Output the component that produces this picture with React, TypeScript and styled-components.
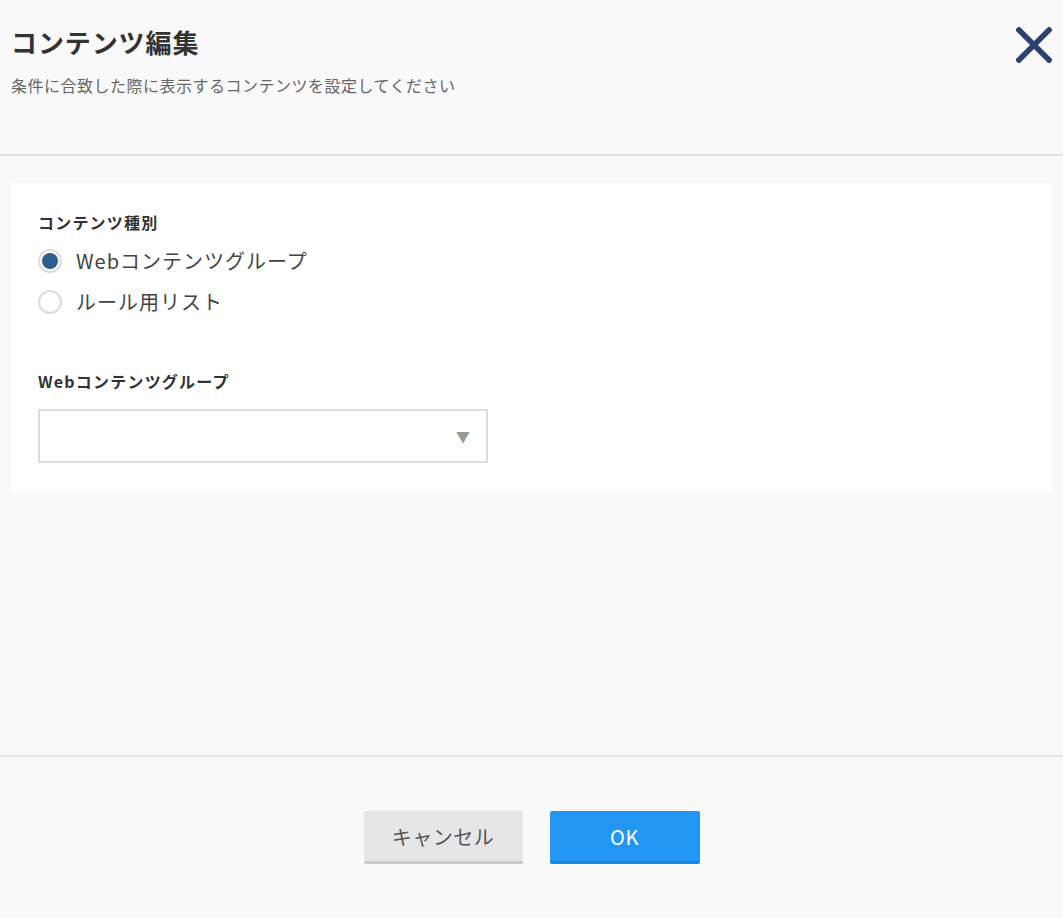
import React, { useState } from "react";
import styled, { createGlobalStyle } from "styled-components";

const GlobalStyle = createGlobalStyle`
  html, body {
    margin: 0;
    padding: 0;
    background: #f9f9f9;
    font-family: "Noto Sans CJK JP", "Noto Sans", sans-serif;
    color: #333;
  }
`;

const Page = styled.div`
  display: flex;
  flex-direction: column;
  height: 918px;
  background: #f9f9f9;
`;

const Header = styled.header`
  display: flex;
  justify-content: space-between;
  align-items: flex-start;
  height: 156px;
  padding: 0 11px;
  border-bottom: 2px solid #e4e4e4;
  box-sizing: border-box;
`;

const TitleBlock = styled.div`
  display: flex;
  flex-direction: column;
`;

const Title = styled.h1`
  margin: 24px 0 0;
  font-size: 26px;
  line-height: 36px;
  font-weight: 700;
  letter-spacing: 0.9px;
  color: #333;
`;

const Subtitle = styled.p`
  margin: 13px 0 0;
  font-size: 16px;
  line-height: 24px;
  letter-spacing: 0.5px;
  color: #666;
`;

const CloseButton = styled.button`
  margin-top: 27px;
  padding: 0;
  border: none;
  background: none;
  cursor: pointer;
  display: flex;
`;

const Body = styled.main`
  flex: 1;
  padding: 27px 11px 0;
`;

const Card = styled.section`
  background: #fff;
  padding: 27px 27px 28px;
  display: flex;
  flex-direction: column;
  box-shadow: 0 0 1px rgba(0, 0, 0, 0.04);
`;

const Label = styled.div<{ $gap?: number }>`
  font-size: 16px;
  line-height: 24px;
  font-weight: 700;
  letter-spacing: 1.2px;
  color: #333;
  margin-top: ${(p) => p.$gap ?? 0}px;
`;

const RadioRow = styled.label`
  display: flex;
  align-items: center;
  height: 41px;
  gap: 14px;
  cursor: pointer;
  font-size: 20px;
  letter-spacing: 1px;
  color: #444;
`;

const RadioCircle = styled.span<{ $checked: boolean }>`
  width: 24px;
  height: 24px;
  border-radius: 50%;
  border: 2px solid #dcdcdc;
  box-sizing: border-box;
  display: flex;
  align-items: center;
  justify-content: center;
  &::after {
    content: "";
    width: 16px;
    height: 16px;
    border-radius: 50%;
    background: ${(p) => (p.$checked ? "#2e5d8e" : "transparent")};
  }
`;

const RadioGroup = styled.div`
  display: flex;
  flex-direction: column;
  margin-top: 6px;
`;

const Select = styled.div`
  margin-top: 16px;
  width: 450px;
  height: 54px;
  border: 2px solid #dcdcdc;
  box-sizing: border-box;
  display: flex;
  align-items: center;
  justify-content: flex-end;
  padding-right: 16px;
  color: #999;
  font-size: 14px;
`;

const Footer = styled.footer`
  height: 163px;
  border-top: 2px solid #e4e4e4;
  display: flex;
  justify-content: center;
  align-items: center;
  gap: 27px;
  box-sizing: border-box;
`;

const Button = styled.button<{ $primary?: boolean }>`
  width: ${(p) => (p.$primary ? 150 : 159)}px;
  height: 53px;
  border: none;
  border-radius: 2px;
  border-bottom: 3px solid ${(p) => (p.$primary ? "#1c86dd" : "#c9c9c9")};
  background: ${(p) => (p.$primary ? "#2196f3" : "#e6e6e6")};
  color: ${(p) => (p.$primary ? "#fff" : "#555")};
  font-family: "Noto Sans CJK JP", "Noto Sans", sans-serif;
  font-size: 20px;
  letter-spacing: 0.5px;
  padding: 0;
  cursor: pointer;
`;

const options = ["Webコンテンツグループ", "ルール用リスト"];

export default function App() {
  const [selected, setSelected] = useState(0);

  return (
    <Page>
      <GlobalStyle />
      <Header>
        <TitleBlock>
          <Title>コンテンツ編集</Title>
          <Subtitle>条件に合致した際に表示するコンテンツを設定してください</Subtitle>
        </TitleBlock>
        <CloseButton aria-label="close">
          <svg width="36" height="36" viewBox="0 0 36 36">
            <path
              d="M3 3 L33 33 M33 3 L3 33"
              stroke="#2b4172"
              strokeWidth="5.5"
              strokeLinecap="square"
            />
          </svg>
        </CloseButton>
      </Header>
      <Body>
        <Card>
          <Label>コンテンツ種別</Label>
          <RadioGroup>
            {options.map((opt, i) => (
              <RadioRow key={opt} onClick={() => setSelected(i)}>
                <RadioCircle $checked={selected === i} />
                {opt}
              </RadioRow>
            ))}
          </RadioGroup>
          <Label $gap={47}>Webコンテンツグループ</Label>
          <Select>▼</Select>
        </Card>
      </Body>
      <Footer>
        <Button>キャンセル</Button>
        <Button $primary>OK</Button>
      </Footer>
    </Page>
  );
}
